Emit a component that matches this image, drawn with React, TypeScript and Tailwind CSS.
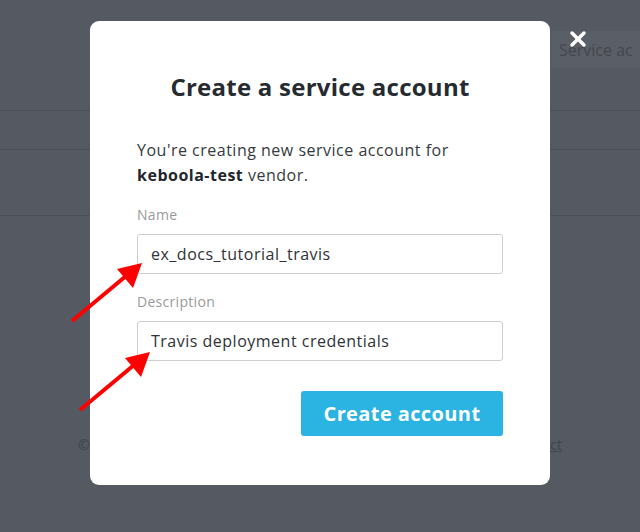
import { X } from "lucide-react";

const font = { fontFamily: '"Open Sans", "Liberation Sans", sans-serif' };

function Arrow({ className }: { className: string }) {
  return (
    <svg className={className} width="80" height="64" viewBox="0 0 80 64">
      <line x1="4" y1="60" x2="58" y2="15" stroke="#ff0000" strokeWidth="4" strokeLinecap="butt" />
      <polygon points="74,2 49,8 65,27" fill="#ff0000" />
    </svg>
  );
}

function Field({ label, value }: { label: string; value: string }) {
  return (
    <div className="flex flex-col">
      <label className="text-[14px] leading-[18px] tracking-[0.3px] text-[#9a9a9a]">{label}</label>
      <div className="mt-[10px] flex h-[40px] items-center rounded-[3px] border border-[#cfcfcf] bg-white px-[13px] text-[16px] tracking-[0.5px] text-[#2f3238]">
        {value}
      </div>
    </div>
  );
}

export default function App() {
  return (
    <div style={font} className="relative h-[532px] w-[640px] overflow-hidden bg-[#555961]">
      {/* dimmed page behind the modal */}
      <div className="flex h-full flex-col">
        <div className="flex h-[110px] items-start justify-end pt-[31px]">
          <div className="flex h-[37px] w-[89px] items-center overflow-hidden bg-[#5a5e66] pl-[8px] text-[16px] whitespace-nowrap text-[#44474e]">
            Service ac
          </div>
        </div>
        <div className="h-[39px] border-t border-[#4b4f57]" />
        <div className="h-[66px] border-t border-[#4b4f57]" />
        <div className="border-t border-[#4b4f57]" />
        <div className="mt-[218px] flex items-center justify-between px-[78px] text-[14px] text-[#40444b]">
          <span>©</span>
          <span className="underline">Contact</span>
        </div>
      </div>

      {/* overlay */}
      <div className="absolute inset-0 flex justify-center">
        <div className="mt-[21px] flex h-[464px] w-[460px] flex-col rounded-[9px] bg-white px-[47px]">
          <h1 className="mt-[50px] text-center text-[24px] leading-[32px] font-bold tracking-[0.25px] text-[#262a31]">
            Create a service account
          </h1>
          <p className="mt-[35px] text-[16px] leading-[25px] tracking-[0.5px] text-[#363a40]">
            You're creating new service account for
            <br />
            <b className="font-bold text-[#22262c]">keboola-test</b> vendor.
          </p>
          <div className="mt-[18px] flex flex-col gap-[19px]">
            <Field label="Name" value="ex_docs_tutorial_travis" />
            <Field label="Description" value="Travis deployment credentials" />
          </div>
          <div className="mt-[30px] flex justify-end">
            <button className="h-[45px] w-[202px] rounded-[3px] bg-[#2bb3e1] text-[20px] font-bold tracking-[0.4px] text-white">
              Create account
            </button>
          </div>
        </div>
        <button className="absolute top-[27px] left-[566px] text-white">
          <X size={24} strokeWidth={3.5} />
        </button>
        <Arrow className="absolute top-[261px] left-[68px]" />
        <Arrow className="absolute top-[350px] left-[76px]" />
      </div>
    </div>
  );
}
